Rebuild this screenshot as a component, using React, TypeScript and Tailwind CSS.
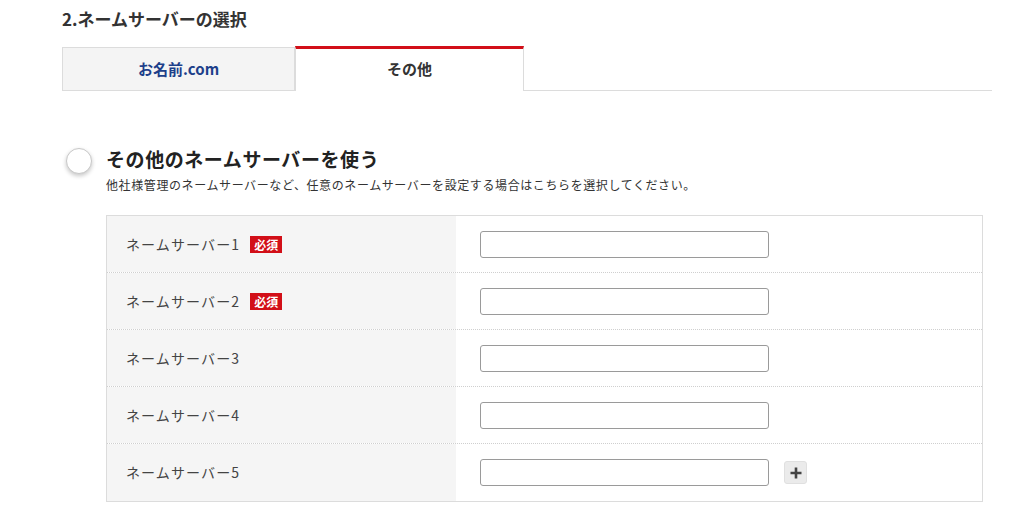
import React from "react";

const rows = [
  { label: "ネームサーバー1", required: true, plus: false },
  { label: "ネームサーバー2", required: true, plus: false },
  { label: "ネームサーバー3", required: false, plus: false },
  { label: "ネームサーバー4", required: false, plus: false },
  { label: "ネームサーバー5", required: false, plus: true },
];

export default function App() {
  return (
    <div
      className="w-[1024px] h-[522px] bg-white text-[#333] overflow-hidden"
      style={{ fontFamily: '"Noto Sans CJK JP", "Noto Sans", sans-serif' }}
    >
      <div className="pl-[62px] pr-[32px] pt-[8px]">
        <h2 className="text-[17px] font-bold leading-[22px] text-[#333]">2.ネームサーバーの選択</h2>

        {/* Tabs */}
        <div className="mt-[16px] flex items-end h-[45px]">
          <div className="w-[233px] h-[44px] bg-[#f4f4f4] border border-[#dcdcdc] flex items-center justify-center text-[15px] font-bold text-[#1d3f8a]">
            お名前.com
          </div>
          <div className="w-[229px] h-[45px] bg-white border-t-[3px] border-t-[#d20f18] border-x border-x-[#dcdcdc] flex items-center justify-center text-[15px] font-bold text-[#333] pb-[2px]">
            その他
          </div>
          <div className="flex-1 h-[45px] border-b border-[#dcdcdc]" />
        </div>

        {/* Option */}
        <div className="mt-[56px] flex">
          <div className="pl-[4px] w-[44px] pt-[1px]">
            <div className="w-[26px] h-[26px] rounded-full border border-[#c8c8c8] bg-white shadow-[0_2px_4px_rgba(0,0,0,0.22)]" />
          </div>
          <div className="flex-1">
            <div className="text-[19px] font-bold leading-[24px] tracking-[0.03em] text-[#222]">その他のネームサーバーを使う</div>
            <div className="mt-[6px] text-[12px] leading-[16px] tracking-[0.05em] text-[#333]">
              他社様管理のネームサーバーなど、任意のネームサーバーを設定する場合はこちらを選択してください。
            </div>

            <div className="mt-[22px] w-[877px] border border-[#dcdcdc]">
              {rows.map((r, i) => (
                <div
                  key={r.label}
                  className={
                    "flex h-[57px] " +
                    (i < rows.length - 1 ? "border-b border-dotted border-[#cfcfcf]" : "")
                  }
                >
                  <div className="w-[349px] bg-[#f5f5f5] flex items-center pl-[19px] text-[14px] tracking-[0.08em] text-[#444]">
                    <span>{r.label}</span>
                    {r.required && (
                      <span className="ml-[10px] bg-[#d20f18] text-white text-[12px] font-bold leading-[17px] px-[4px] tracking-normal">
                        必須
                      </span>
                    )}
                  </div>
                  <div className="flex-1 flex items-center pl-[24px]">
                    <div className="w-[289px] h-[27px] rounded-[3px] border border-[#9a9a9a] bg-white" />
                    {r.plus && (
                      <div className="ml-[15px] w-[23px] h-[23px] rounded-[3px] bg-[#ebebeb] border border-[#e0e0e0] flex items-center justify-center">
                        <svg width="14" height="14" viewBox="0 0 14 14">
                          <path d="M7 1.5v11M1.5 7h11" stroke="#444" strokeWidth="2.6" />
                        </svg>
                      </div>
                    )}
                  </div>
                </div>
              ))}
            </div>
          </div>
        </div>
      </div>
    </div>
  );
}
